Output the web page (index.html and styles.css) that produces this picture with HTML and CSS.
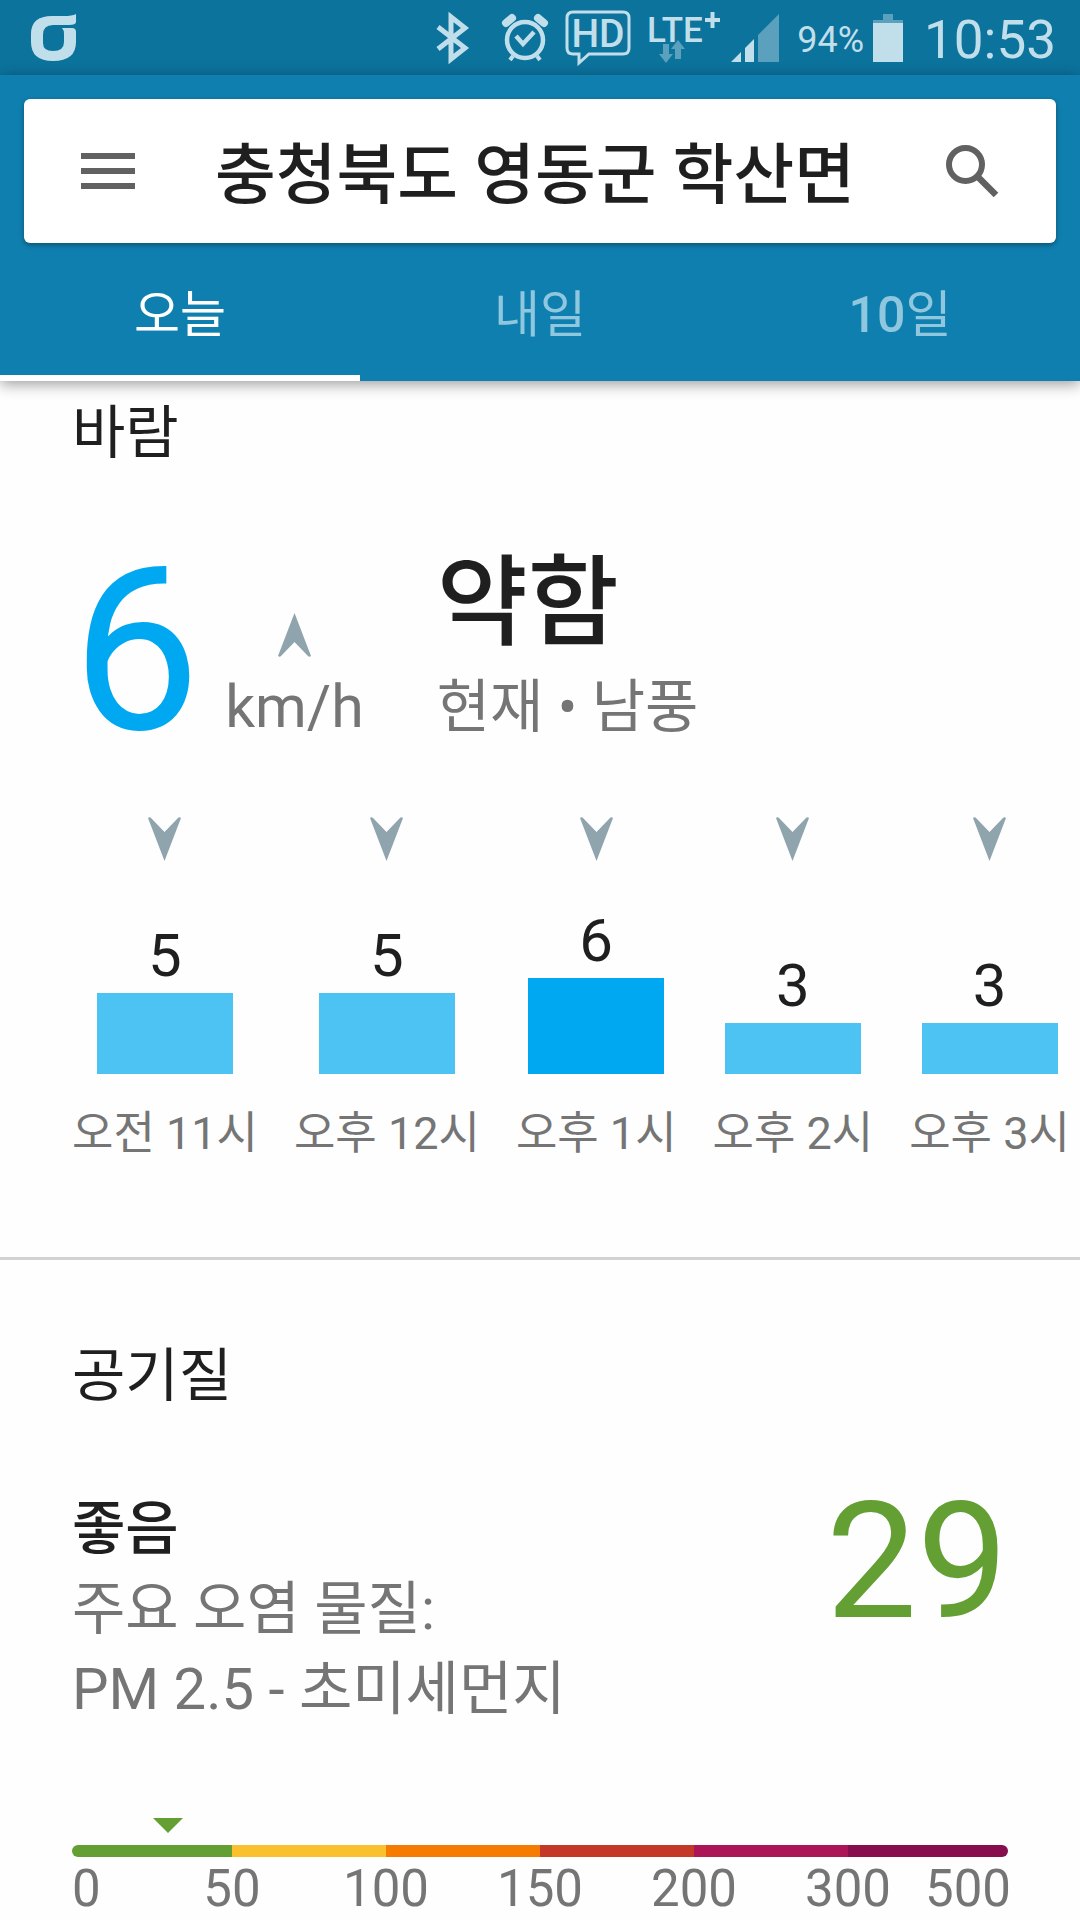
FILE: index.html
```html
<!DOCTYPE html>
<html lang="ko">

<head>
    <meta charset="UTF-8">
    <meta name="viewport" content="width=device-width, initial-scale=1.0">
    <title>날씨</title>
    <link rel="stylesheet" href="styles.css">
</head>

<body>
    <!-- 상태 표시줄 -->
    <div class="status-bar">
        <svg class="logo" width="46" height="48" viewBox="0 0 46 48">
            <path fill-rule="evenodd" d="M21 2H33Q41 2 45 0V8Q45 11 38 11H22Q12 11 12 21V29Q12 37 22 37Q33 37 33 28V20Q33 16 31 14H41Q45 14 45 18V28Q45 47 22 47Q0 47 0 28V20Q0 2 21 2Z"/>
        </svg>
        <svg class="bluetooth" width="33" height="48" viewBox="0 0 33 48">
            <path d="M2 13L29 34L15 45V3L29 14L2 35" fill="none" stroke="currentColor" stroke-width="5"/>
        </svg>
        <svg class="alarm" width="44" height="48" viewBox="0 0 44 48" fill="none" stroke="currentColor">
            <circle cx="22" cy="26" r="18" stroke-width="4.5"/>
            <path d="M3 9L9 4M41 9L35 4" stroke-width="8" stroke-linecap="round"/>
            <path d="M10 42L7 46M34 42L37 46" stroke-width="4"/>
            <path d="M13 22L20 30L31 18" stroke-width="4.5"/>
        </svg>
        <svg class="hd" width="66" height="56" viewBox="0 0 66 56">
            <path d="M8 2H58Q64 2 64 8V38Q64 44 58 44H24L14 53V44H8Q2 44 2 38V8Q2 2 8 2Z" fill="none" stroke="currentColor" stroke-width="3"/>
            <text x="33" y="37" text-anchor="middle" font-size="39">HD</text>
        </svg>
        <svg class="lte" width="74" height="54" viewBox="0 0 74 54">
            <text x="0" y="31" font-size="35">LTE</text>
            <path d="M58 9H73M65.5 1V17" stroke="currentColor" stroke-width="4"/>
            <path class="dim" d="M16 33H22V43H26L19 52L12 43H16ZM28 48V38H24L31 29L38 38H34V48Z"/>
        </svg>
        <svg class="signal" width="48" height="48" viewBox="0 0 48 48">
            <path d="M0 48L10 38V48ZM14 34L23 25V48H14Z"/>
            <path class="dim" d="M27 21L48 0V48H27Z"/>
        </svg>
        <span class="percent">94%</span>
        <svg class="battery" width="30" height="48" viewBox="0 0 30 48">
            <path class="dim" d="M10 0H20V6H30V9H0V6H10Z"/>
            <path d="M0 9H30V48H0Z"/>
        </svg>
        <span class="clock">10:53</span>
    </div>

    <!-- 검색창과 탭 -->
    <header class="header">
        <form class="search">
            <button type="button" class="icon-button" aria-label="메뉴">
                <svg width="54" height="36" viewBox="0 0 54 36">
                    <path d="M0 0H54V6H0ZM0 15H54V21H0ZM0 30H54V36H0Z"/>
                </svg>
            </button>
            <input type="text" class="search-text" aria-label="위치" value="충청북도 영동군 학산면">
            <button type="button" class="icon-button" aria-label="검색">
                <svg width="52" height="52" viewBox="0 0 52 52" fill="none" stroke="currentColor">
                    <circle cx="19.5" cy="19.5" r="16.5" stroke-width="6"/>
                    <path d="M31 31L50 50" stroke-width="6.5"/>
                    <path d="M31 34V31H34" stroke-width="4"/>
                </svg>
            </button>
        </form>
        <nav class="tabs">
            <a href="#today" class="tab active">오늘</a>
            <a href="#tomorrow" class="tab">내일</a>
            <a href="#ten-days" class="tab"><b>10</b>일</a>
        </nav>
    </header>

    <main>
        <!-- 바람 -->
        <section class="wind">
            <h2>바람</h2>
            <div class="wind-now">
                <div class="speed">6</div>
                <div class="unit">
                    <svg class="arrow up" width="33" height="44" viewBox="0 0 33 44"><path d="M0 1Q2-1 4 2L16.5 15L29 2Q31-1 33 1L16.5 44Z"/></svg>
                    <span>km/h</span>
                </div>
                <div>
                    <p class="strength">약함</p>
                    <p class="sub">현재 • 남풍</p>
                </div>
            </div>
            <ul class="hours">
                <li>
                    <svg class="arrow" width="33" height="44" viewBox="0 0 33 44"><path d="M0 1Q2-1 4 2L16.5 15L29 2Q31-1 33 1L16.5 44Z"/></svg>
                    <div class="column"><span>5</span><div class="bar" style="height: 81px"></div></div>
                    <span class="hour">오전 11시</span>
                </li>
                <li>
                    <svg class="arrow" width="33" height="44" viewBox="0 0 33 44"><path d="M0 1Q2-1 4 2L16.5 15L29 2Q31-1 33 1L16.5 44Z"/></svg>
                    <div class="column"><span>5</span><div class="bar" style="height: 81px"></div></div>
                    <span class="hour">오후 12시</span>
                </li>
                <li>
                    <svg class="arrow" width="33" height="44" viewBox="0 0 33 44"><path d="M0 1Q2-1 4 2L16.5 15L29 2Q31-1 33 1L16.5 44Z"/></svg>
                    <div class="column"><span>6</span><div class="bar now" style="height: 96px"></div></div>
                    <span class="hour">오후 1시</span>
                </li>
                <li>
                    <svg class="arrow" width="33" height="44" viewBox="0 0 33 44"><path d="M0 1Q2-1 4 2L16.5 15L29 2Q31-1 33 1L16.5 44Z"/></svg>
                    <div class="column"><span>3</span><div class="bar" style="height: 51px"></div></div>
                    <span class="hour">오후 2시</span>
                </li>
                <li>
                    <svg class="arrow" width="33" height="44" viewBox="0 0 33 44"><path d="M0 1Q2-1 4 2L16.5 15L29 2Q31-1 33 1L16.5 44Z"/></svg>
                    <div class="column"><span>3</span><div class="bar" style="height: 51px"></div></div>
                    <span class="hour">오후 3시</span>
                </li>
            </ul>
        </section>

        <!-- 공기질 -->
        <section class="air">
            <h2>공기질</h2>
            <div class="air-now">
                <div>
                    <p class="grade">좋음</p>
                    <p class="sub">주요 오염 물질:</p>
                    <p class="sub">PM 2.5 - 초미세먼지</p>
                </div>
                <div class="index">29</div>
            </div>
            <div class="scale">
                <svg class="marker" style="margin-left: 8.7%" width="30" height="15" viewBox="0 0 30 15"><path d="M0 0H30L15 15Z"/></svg>
                <div class="scale-bar">
                    <i class="good"></i>
                    <i class="moderate"></i>
                    <i class="sensitive"></i>
                    <i class="unhealthy"></i>
                    <i class="very-unhealthy"></i>
                    <i class="hazardous"></i>
                </div>
                <div class="scale-labels">
                    <span>0</span>
                    <span>50</span>
                    <span>100</span>
                    <span>150</span>
                    <span>200</span>
                    <span>300</span>
                    <span>500</span>
                </div>
            </div>
        </section>
    </main>
</body>

</html>
```
FILE: styles.css
```css
* {
    box-sizing: border-box;
}

body {
    margin: 0;
    background: #fefefe;
    color: #1f1f1f;
    font-family: Roboto, "Noto Sans CJK KR", sans-serif;
    font-size: 58px;
    line-height: 80px;
}

h2,
p,
ul {
    margin: 0;
    padding: 0;
}

svg {
    display: block;
    flex: none;
    fill: currentColor;
    overflow: visible;
}

svg[fill="none"] {
    fill: none;
}

/* 상태 표시줄 */
.status-bar {
    display: flex;
    align-items: center;
    height: 75px;
    padding: 0 24px 0 31px;
    background: #0c739d;
    color: #c1dfea;
}

.status-bar text {
    font-family: Roboto, sans-serif;
    font-weight: 500;
}

.logo {
    margin-right: auto;
}

.bluetooth {
    margin-right: 34px;
}

.alarm {
    margin-right: 18px;
}

.hd {
    margin-right: 16px;
}

.lte {
    margin-right: 10px;
}

.signal {
    margin-right: 18px;
}

.dim {
    fill: #5ba1bd;
}

.percent,
.clock {
    padding-top: 4px;
}

.percent {
    margin-right: 9px;
    font-size: 36px;
}

.clock {
    margin-left: 21px;
    font-size: 53px;
}

/* 헤더 */
.header {
    position: relative;
    padding-top: 24px;
    background: #0f7faf;
    box-shadow: 0 3px 14px rgba(0, 0, 0, 0.4);
}

.search {
    display: flex;
    align-items: center;
    height: 144px;
    margin: 0 24px;
    padding: 0 58px 0 57px;
    border-radius: 6px;
    background: #fff;
    box-shadow: 0 2px 5px rgba(0, 0, 0, 0.35);
}

.icon-button {
    padding: 0;
    border: none;
    background: none;
    color: #616161;
    cursor: pointer;
}

.search-text {
    flex: 1;
    min-width: 0;
    height: 96px;
    margin: 0 24px 4px 80px;
    padding: 0;
    border: none;
    outline: none;
    background: none;
    color: #1f1f1f;
    font-family: inherit;
    font-size: 66px;
    font-weight: 500;
}

.tabs {
    display: flex;
}

.tab {
    flex: 1;
    height: 138px;
    padding-top: 32px;
    border-bottom: 6px solid transparent;
    color: #8ec7de;
    font-size: 50px;
    text-align: center;
    text-decoration: none;
}

.tab b {
    font-weight: 500;
}

.tab.active {
    border-color: #fff;
    color: #fff;
}

/* 공통 텍스트 */
h2 {
    font-size: 58px;
    font-weight: 400;
}

.sub {
    color: #757575;
}

/* 바람 */
.wind {
    padding: 12px 0 93px 72px;
    border-bottom: 3px solid #d2d2d2;
}

.wind-now {
    display: flex;
    align-items: flex-end;
    margin: 66px 0 70px;
}

.speed {
    color: #00a8f1;
    font-size: 228px;
    line-height: 192px;
}

.unit {
    display: flex;
    flex-direction: column;
    align-items: center;
    gap: 10px;
    margin: 0 73px 0 25px;
    color: #757575;
    font-size: 59px;
}

.arrow {
    color: #8fa4ad;
}

.arrow.up {
    transform: rotate(180deg);
}

.strength {
    font-size: 99px;
    font-weight: 500;
    line-height: 128px;
}

.hours {
    display: flex;
    gap: 36px;
    overflow: hidden;
    list-style: none;
}

.hours li {
    display: flex;
    flex: none;
    flex-direction: column;
    align-items: center;
}

.column {
    display: flex;
    flex-direction: column;
    justify-content: flex-end;
    height: 213px;
    font-size: 60px;
    line-height: 74px;
    text-align: center;
}

.bar {
    width: 136px;
    background: #4dc3f4;
}

.bar.now {
    background: #00a8f1;
}

.hour {
    margin-top: 30px;
    color: #757575;
    font-size: 45px;
    line-height: 60px;
}

/* 공기질 */
.air {
    padding: 76px 72px 0;
}

.air-now {
    display: flex;
    justify-content: space-between;
    margin: 73px 0 89px;
}

.grade {
    font-weight: 500;
}

.index {
    color: #639f33;
    font-size: 162px;
    line-height: 146px;
}

.marker {
    color: #639f33;
}

.scale-bar {
    display: flex;
    height: 12px;
    margin-top: 12px;
    border-radius: 6px;
    overflow: hidden;
}

.scale-bar i {
    flex: 154;
}

.scale-bar i:first-child,
.scale-bar i:last-child {
    flex: 160;
}

.good {
    background: #639f33;
}

.moderate {
    background: #fac02d;
}

.sensitive {
    background: #f57c00;
}

.unhealthy {
    background: #c33826;
}

.very-unhealthy {
    background: #ab1456;
}

.hazardous {
    background: #860e4e;
}

.scale-labels {
    display: flex;
    color: #757575;
    font-size: 51px;
    line-height: 64px;
}

.scale-labels span {
    flex: 154;
    min-width: 0;
    text-align: center;
}

.scale-labels span:first-child {
    flex: 83;
    text-align: left;
}

.scale-labels span:last-child {
    flex: 83;
    text-align: right;
}
```
